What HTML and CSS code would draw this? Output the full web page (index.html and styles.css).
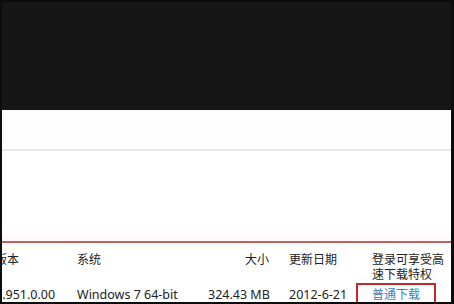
FILE: index.html
```html
<!DOCTYPE html>
<html lang="zh-CN">
<head>
<meta charset="utf-8">
<link rel="stylesheet" href="styles.css">
</head>
<body>
<div class="frame">
  <div class="dark"></div>
  <div class="page">
    <div class="band"></div>
    <div class="blank"></div>
    <div class="table">
      <div class="cell c1 head">版本</div>
      <div class="cell c2 head">系统</div>
      <div class="cell c3 head">大小</div>
      <div class="cell c4 head">更新日期</div>
      <div class="cell c5 head">登录可享受高<br>速下载特权</div>
      <div class="cell c1 data">1.951.0.00</div>
      <div class="cell c2 data">Windows 7 64-bit</div>
      <div class="cell c3 data">324.43 MB</div>
      <div class="cell c4 data">2012-6-21</div>
      <div class="cell c5 data"><a class="dl" href="#">普通下载</a><span class="mark"></span></div>
    </div>
  </div>
</div>
</body>
</html>
```
FILE: styles.css
```css
html, body {
  margin: 0;
  padding: 0;
  width: 454px;
  height: 304px;
  overflow: hidden;
  background: #0c0c0c;
}
.frame {
  box-sizing: border-box;
  width: 454px;
  height: 304px;
  padding: 2px 3px 2px 2px;
  display: flex;
  flex-direction: column;
  background: #0c0c0c;
  font-family: "Noto Sans", "Noto Sans CJK SC", sans-serif;
  font-size: 12px;
  color: #222;
}
.dark {
  height: 108px;
  flex: none;
  background: #161616;
}
.page {
  flex: 1;
  background: #fff;
  display: flex;
  flex-direction: column;
  overflow: hidden;
}
.band {
  height: 39px;
  flex: none;
  border-bottom: 2px solid #e8e8e8;
  background: #fdfdfd;
}
.blank {
  height: 90px;
  flex: none;
  background: linear-gradient(#fff 0, #fff 85%, #fdf8f9 100%);
  border-bottom: 2px solid #c0605e;
}
.table {
  display: grid;
  grid-template-columns: 82px 131px 81px 83px 1fr;
  margin-left: -7px;
  line-height: 15px;
}
.cell {
  white-space: nowrap;
  position: relative;
}
.head {
  padding-top: 9px;
}
.data {
  padding-top: 5px;
  font-size: 12.5px;
}
.c3 {
  text-align: right;
  padding-right: 20px;
}
.dl {
  font-size: 12px;
  color: #2f86c4;
  text-decoration: none;
  position: relative;
  z-index: 1;
}
.mark {
  position: absolute;
  left: -16px;
  top: 1px;
  width: 80px;
  height: 30px;
  box-sizing: border-box;
  border: 2px solid #c8262c;
}
```
